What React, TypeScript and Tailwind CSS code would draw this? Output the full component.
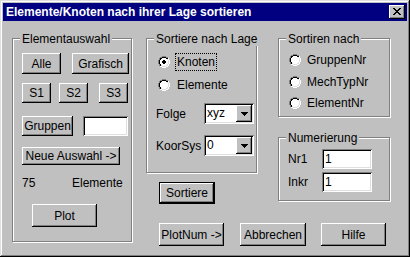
import React from "react";

const raised =
  "bg-[#c0c0c0] shadow-[inset_-1px_-1px_#000,inset_1px_1px_#fff,inset_-2px_-2px_#808080]";
const sunken =
  "bg-white shadow-[inset_1px_1px_#808080,inset_-1px_-1px_#fff,inset_2px_2px_#000,inset_-2px_-2px_#dfdfdf]";

function Btn({
  children,
  className = "",
  def = false,
}: {
  children: React.ReactNode;
  className?: string;
  def?: boolean;
}) {
  return (
    <div
      className={`${def ? "border border-black" : ""} ${raised} flex items-center justify-center shrink-0 whitespace-nowrap ${className}`}
    >
      {children}
    </div>
  );
}

function Group({
  label,
  className = "",
  children,
}: {
  label: string;
  className?: string;
  children?: React.ReactNode;
}) {
  return (
    <div
      className={`relative shrink-0 border border-[#808080] shadow-[1px_1px_0_#fff,inset_1px_1px_0_#fff] ${className}`}
    >
      <span className="absolute top-[-7px] left-[7px] bg-[#c0c0c0] px-[2px] leading-[14px] whitespace-nowrap">
        {label}
      </span>
      {children}
    </div>
  );
}

const OUTER: [number, number][] = [
  [0, 4], [0, 5], [0, 6], [0, 7],
  [1, 2], [1, 3], [1, 8], [1, 9],
  [2, 1], [2, 10], [3, 1], [3, 10],
  [4, 0], [4, 11], [5, 0], [5, 11], [6, 0], [6, 11], [7, 0], [7, 11],
  [8, 1], [8, 10], [9, 1], [9, 10],
  [10, 2], [10, 3], [10, 8], [10, 9],
  [11, 4], [11, 5], [11, 6], [11, 7],
];
const INNER: [number, number][] = [
  [1, 4], [1, 5], [1, 6], [1, 7],
  [2, 2], [2, 3], [2, 8], [2, 9],
  [3, 2], [3, 9],
  [4, 1], [4, 10], [5, 1], [5, 10], [6, 1], [6, 10], [7, 1], [7, 10],
  [8, 2], [8, 9],
  [9, 2], [9, 3], [9, 8], [9, 9],
  [10, 4], [10, 5], [10, 6], [10, 7],
];

function Radio({ checked = false }: { checked?: boolean }) {
  return (
    <svg width="12" height="12" viewBox="0 0 12 12" className="shrink-0" shapeRendering="crispEdges">
      <rect x="2" y="2" width="8" height="8" fill="#fff" />
      <rect x="3" y="1.5" width="6" height="9" fill="#fff" />
      <rect x="1.5" y="3" width="9" height="6" fill="#fff" />
      {OUTER.map(([r, c]) => (
        <rect key={`o${r}-${c}`} x={c} y={r} width="1" height="1" fill={r + c < 11 ? "#808080" : "#ffffff"} />
      ))}
      {INNER.map(([r, c]) => (
        <rect key={`i${r}-${c}`} x={c} y={r} width="1" height="1" fill={r + c <= 11 ? "#000000" : "#dfdfdf"} />
      ))}
      {checked && (
        <g fill="#000">
          <rect x="5" y="4" width="2" height="1" />
          <rect x="4" y="5" width="4" height="2" />
          <rect x="5" y="7" width="2" height="1" />
        </g>
      )}
    </svg>
  );
}

function CloseX() {
  const rows = [
    [0, 1, 6, 7],
    [1, 2, 5, 6],
    [2, 3, 4, 5],
    [3, 4],
    [2, 3, 4, 5],
    [1, 2, 5, 6],
    [0, 1, 6, 7],
  ];
  return (
    <svg width="8" height="7" viewBox="0 0 8 7" shapeRendering="crispEdges">
      {rows.map((cols, r) =>
        cols.map((c) => <rect key={`${r}-${c}`} x={c} y={r} width="1" height="1" fill="#000" />)
      )}
    </svg>
  );
}

function Arrow() {
  return (
    <svg width="7" height="4" viewBox="0 0 7 4" shapeRendering="crispEdges">
      <rect x="0" y="0" width="7" height="1" fill="#000" />
      <rect x="1" y="1" width="5" height="1" fill="#000" />
      <rect x="2" y="2" width="3" height="1" fill="#000" />
      <rect x="3" y="3" width="1" height="1" fill="#000" />
    </svg>
  );
}

function Combo({ value }: { value: string }) {
  return (
    <div className={`${sunken} w-[50px] h-[21px] p-[2px] flex shrink-0`}>
      <span className="flex-1 pl-[1px] leading-[17px]">{value}</span>
      <div className={`${raised} w-[16px] h-full flex items-center justify-center`}>
        <Arrow />
      </div>
    </div>
  );
}

export default function App() {
  return (
    <div className="w-[410px] h-[257px] overflow-hidden bg-[#c0c0c0] text-black text-[12px] leading-[14px] font-['Liberation_Sans_Narrow','Liberation_Sans',Arial,sans-serif] shadow-[inset_-1px_-1px_#000,inset_1px_1px_#dfdfdf,inset_-2px_-2px_#808080,inset_2px_2px_#fff]">
      <div className="px-[3px] pt-[3px]">
        <div className="h-[18px] bg-[#000080] flex items-center justify-between pl-[3px] pr-[2px]">
          <span className="text-white font-bold text-[12px] leading-[18px] font-['Liberation_Sans',Arial,sans-serif] whitespace-nowrap">
            Elemente/Knoten nach ihrer Lage sortieren
          </span>
          <div className={`${raised} w-[16px] h-[14px] flex items-center justify-center pr-[1px] pb-[1px]`}>
            <CloseX />
          </div>
        </div>
      </div>

      <div className="flex pl-[12px] pt-[17px]">
        {/* Elementauswahl */}
        <Group label="Elementauswahl" className="w-[120px] h-[204px]">
          <div className="flex flex-col pl-[9px] items-start">
            <div className="flex mt-[14px]">
              <Btn className="w-[39px] h-[21px]">Alle</Btn>
              <Btn className="w-[57px] h-[21px] ml-[11px]">Grafisch</Btn>
            </div>
            <div className="flex mt-[9px]">
              <Btn className="w-[29px] h-[20px]">S1</Btn>
              <Btn className="w-[29px] h-[20px] ml-[8px]">S2</Btn>
              <Btn className="w-[29px] h-[20px] ml-[11px]">S3</Btn>
            </div>
            <div className="flex mt-[13px]">
              <Btn className="w-[51px] h-[20px]">Gruppen</Btn>
              <div className={`${sunken} w-[45px] h-[20px] ml-[10px]`} />
            </div>
            <Btn className="w-[98px] h-[18px] mt-[11px]">Neue Auswahl -&gt;</Btn>
            <div className="flex mt-[11px] h-[14px]">
              <span className="w-[50px]">75</span>
              <span>Elemente</span>
            </div>
            <Btn className="w-[65px] h-[23px] mt-[14px] ml-[10px]">Plot</Btn>
          </div>
        </Group>

        <div className="ml-[14px] flex flex-col">
          <div className="flex">
            {/* middle column */}
            <div className="flex flex-col w-[111px] items-start">
              <Group label="Sortiere nach Lage" className="w-[111px] h-[135px]">
                <div className="flex flex-col pl-[9px]">
                  <div className="flex items-center h-[18px] mt-[14px] pl-[2px]">
                    <Radio checked />
                    <span className="ml-[5px] border border-dotted border-black px-[1px] leading-[16px]">
                      Knoten
                    </span>
                  </div>
                  <div className="flex items-center h-[18px] mt-[5px] pl-[2px]">
                    <Radio />
                    <span className="ml-[7px]">Elemente</span>
                  </div>
                  <div className="flex items-center mt-[9px]">
                    <span className="w-[48px]">Folge</span>
                    <Combo value="xyz" />
                  </div>
                  <div className="flex items-center mt-[11px]">
                    <span className="w-[48px]">KoorSys</span>
                    <Combo value="0" />
                  </div>
                </div>
              </Group>
              <Btn def className="w-[56px] h-[22px] mt-[9px] ml-[13px]">
                Sortiere
              </Btn>
            </div>

            {/* right column */}
            <div className="ml-[21px] flex flex-col">
              <Group label="Sortiren nach" className="w-[112px] h-[79px]">
                <div className="flex flex-col pl-[10px]">
                  <div className="flex items-center h-[18px] mt-[12px]">
                    <Radio />
                    <span className="ml-[6px]">GruppenNr</span>
                  </div>
                  <div className="flex items-center h-[18px] mt-[4px]">
                    <Radio />
                    <span className="ml-[6px]">MechTypNr</span>
                  </div>
                  <div className="flex items-center h-[18px] mt-[3px]">
                    <Radio />
                    <span className="ml-[6px]">ElementNr</span>
                  </div>
                </div>
              </Group>
              <Group label="Numerierung" className="w-[112px] h-[64px] mt-[20px]">
                <div className="flex flex-col pl-[9px]">
                  <div className="flex items-center mt-[11px]">
                    <span className="w-[34px]">Nr1</span>
                    <div className={`${sunken} w-[50px] h-[20px] pl-[3px] leading-[20px]`}>1</div>
                  </div>
                  <div className="flex items-center mt-[3px]">
                    <span className="w-[34px]">Inkr</span>
                    <div className={`${sunken} w-[50px] h-[20px] pl-[3px] leading-[20px]`}>1</div>
                  </div>
                </div>
              </Group>
            </div>
          </div>

          <div className="flex mt-[19px] pl-[13px]">
            <Btn className="w-[65px] h-[23px]">PlotNum -&gt;</Btn>
            <Btn className="w-[66px] h-[23px] ml-[16px]">Abbrechen</Btn>
            <Btn className="w-[65px] h-[23px] ml-[15px]">Hilfe</Btn>
          </div>
        </div>
      </div>
    </div>
  );
}
